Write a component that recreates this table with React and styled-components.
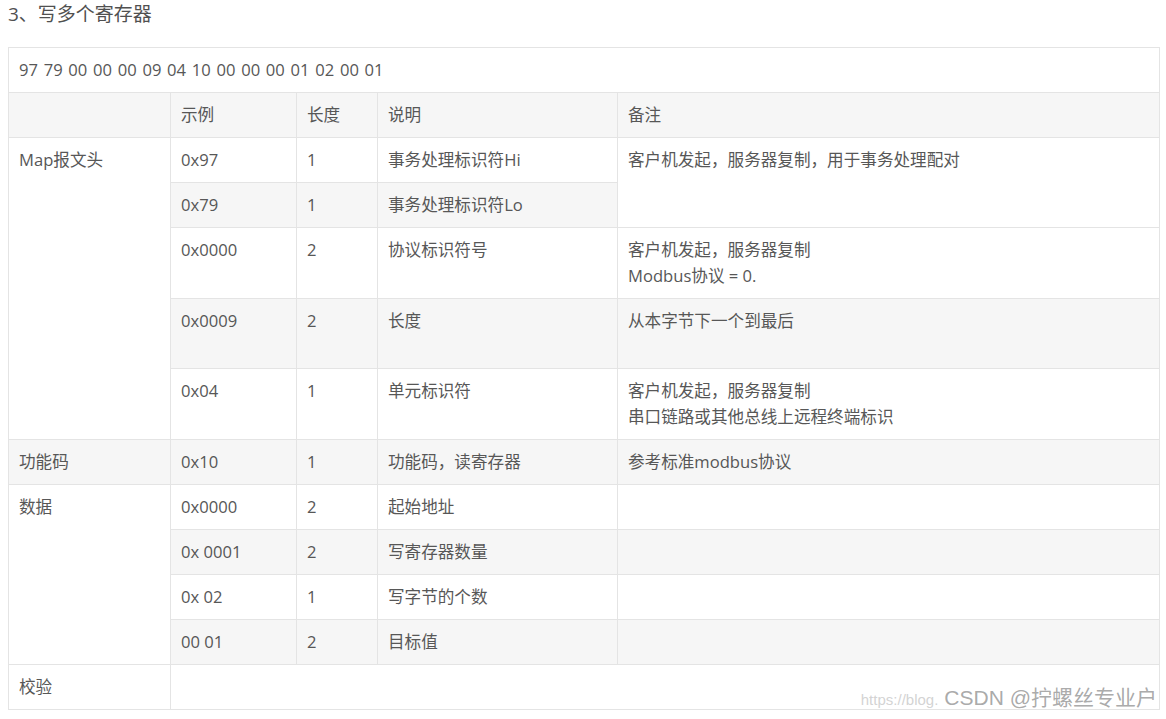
import React from "react";
import styled, { createGlobalStyle } from "styled-components";

const Global = createGlobalStyle`
  html, body { margin: 0; padding: 0; background: #fff; }
  body {
    font-family: "Open Sans", "Noto Sans CJK SC", sans-serif;
    color: #555;
  }
`;

const Page = styled.div`
  position: relative;
  padding: 0 6px 0 8px;
  width: 1166px;
  height: 719px;
  box-sizing: border-box;
  overflow: hidden;
`;

const Title = styled.h3`
  margin: 0 0 19px 0;
  font-size: 19px;
  font-weight: 400;
  line-height: 28px;
  color: #505050;
`;

const Table = styled.table`
  width: 1152px;
  border-collapse: collapse;
  table-layout: fixed;
  border: 1px solid #e4e4e4;
  font-size: 16.6px;
  line-height: 26px;
  color: #575757;
`;

const Row = styled.tr`
  height: ${(p) => (p.$tall ? "70px" : "auto")};
  & > td {
    background: ${(p) => (p.$alt ? "#f6f6f6" : "#ffffff")};
  }
`;

const Cell = styled.td`
  border: 1px solid #e4e4e4;
  padding: 9px 10px;
  vertical-align: top;
  text-align: left;
  white-space: nowrap;
  word-spacing: ${(p) => (p.$wide ? "1.4px" : "normal")};
`;

const Watermark = styled.div`
  position: absolute;
  right: 9px;
  bottom: 8px;
  display: flex;
  align-items: baseline;
  pointer-events: none;
`;

const WmUrl = styled.span`
  font-family: "Liberation Sans", sans-serif;
  font-size: 15px;
  color: rgba(200, 200, 200, 0.8);
  margin-right: 6px;
`;

const WmName = styled.span`
  font-family: "Liberation Sans", "Noto Sans CJK SC", sans-serif;
  font-size: 21px;
  color: rgba(160, 160, 160, 0.9);
  text-shadow: 0 0 2px #fff, 1px 1px 0 #fff;
`;

const rows = [
  { alt: true, cells: [[""], ["示例"], ["长度"], ["说明"], ["备注"]] },
  {
    cells: [
      ["Map报文头", { rowSpan: 5 }],
      ["0x97"],
      ["1"],
      ["事务处理标识符Hi"],
      ["客户机发起，服务器复制，用于事务处理配对", { rowSpan: 2 }],
    ],
  },
  { alt: true, cells: [["0x79"], ["1"], ["事务处理标识符Lo"]] },
  {
    cells: [
      ["0x0000"],
      ["2"],
      ["协议标识符号"],
      [["客户机发起，服务器复制", "Modbus协议 = 0."]],
    ],
  },
  { alt: true, tall: true, cells: [["0x0009"], ["2"], ["长度"], ["从本字节下一个到最后"]] },
  {
    cells: [
      ["0x04"],
      ["1"],
      ["单元标识符"],
      [["客户机发起，服务器复制", "串口链路或其他总线上远程终端标识"]],
    ],
  },
  {
    alt: true,
    cells: [["功能码"], ["0x10"], ["1"], ["功能码，读寄存器"], ["参考标准modbus协议"]],
  },
  { cells: [["数据", { rowSpan: 4 }], ["0x0000"], ["2"], ["起始地址"], [""]] },
  { alt: true, cells: [["0x 0001"], ["2"], ["写寄存器数量"], [""]] },
  { cells: [["0x 02"], ["1"], ["写字节的个数"], [""]] },
  { alt: true, cells: [["00 01"], ["2"], ["目标值"], [""]] },
  { cells: [["校验"], ["", { colSpan: 4 }]] },
];

function renderContent(c) {
  if (Array.isArray(c)) {
    return c.map((line, i) => (
      <React.Fragment key={i}>
        {i > 0 && <br />}
        {line}
      </React.Fragment>
    ));
  }
  return c;
}

export default function App() {
  return (
    <>
      <Global />
      <Page>
        <Title>3、写多个寄存器</Title>
        <Table>
          <colgroup>
            <col style={{ width: 162 }} />
            <col style={{ width: 126 }} />
            <col style={{ width: 81 }} />
            <col style={{ width: 240 }} />
            <col />
          </colgroup>
          <tbody>
            <Row>
              <Cell colSpan={5} $wide>
                97 79 00 00 00 09 04 10 00 00 00 01 02 00 01
              </Cell>
            </Row>
            {rows.map((r, i) => (
              <Row key={i} $alt={r.alt} $tall={r.tall}>
                {r.cells.map(([content, opts], j) => (
                  <Cell key={j} {...(opts || {})}>
                    {renderContent(content)}
                  </Cell>
                ))}
              </Row>
            ))}
          </tbody>
        </Table>
        <Watermark>
          <WmUrl>https://blog.</WmUrl>
          <WmName>CSDN @拧螺丝专业户</WmName>
        </Watermark>
      </Page>
    </>
  );
}
